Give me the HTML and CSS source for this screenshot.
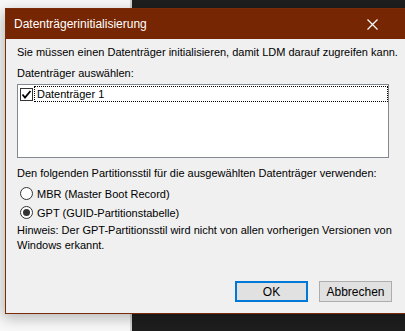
FILE: index.html
```html
<!DOCTYPE html>
<html lang="de">
<head>
  <meta charset="UTF-8" />
  <title>Datenträgerinitialisierung</title>
  <link rel="stylesheet" href="styles.css">
</head>
<body>
  <div class="desktop">
    <div class="pane-light"></div>
    <div class="pane-split"></div>
    <div class="pane-dark"></div>
  </div>

  <div class="dialog">
    <div class="titlebar">
      <span class="title">Datenträgerinitialisierung</span>
      <svg class="close" width="11" height="11" viewBox="0 0 11 11">
        <path d="M0.5 0.5 L10.5 10.5 M10.5 0.5 L0.5 10.5" stroke="#fff" stroke-width="1.2" fill="none"/>
      </svg>
    </div>

    <div class="body">
      <p class="line first">Sie müssen einen Datenträger initialisieren, damit LDM darauf zugreifen kann.</p>
      <p class="line label">Datenträger auswählen:</p>

      <div class="listbox">
        <div class="list-item">
          <span class="check">
            <svg width="11" height="11" viewBox="0 0 11 11">
              <path d="M1.5 5.5 L4 8.5 L9.5 2" stroke="#000" stroke-width="1.8" fill="none"/>
            </svg>
          </span>
          <span class="item-text">Datenträger 1</span>
        </div>
      </div>

      <p class="line style-label">Den folgenden Partitionsstil für die ausgewählten Datenträger verwenden:</p>

      <div class="radios">
        <label class="radio-row"><span class="radio"></span>MBR (Master Boot Record)</label>
        <label class="radio-row"><span class="radio on"></span>GPT (GUID-Partitionstabelle)</label>
      </div>

      <p class="line note">Hinweis: Der GPT-Partitionsstil wird nicht von allen vorherigen Versionen von<br>Windows erkannt.</p>

      <div class="buttons">
        <button class="btn default">OK</button>
        <button class="btn">Abbrechen</button>
      </div>
    </div>
  </div>
</body>
</html>
```

FILE: styles.css
```css
html, body {
  margin: 0;
  padding: 0;
  width: 405px;
  height: 331px;
  overflow: hidden;
}
body {
  font-family: 'Liberation Sans', Arial, sans-serif;
  font-size: 11px;
  color: #000;
  position: relative;
}
.desktop {
  display: flex;
  height: 100%;
}
.pane-light {
  width: 130px;
  background: #f9f9f9;
}
.pane-split {
  width: 2px;
  background: #d4d4d4;
}
.pane-dark {
  flex: 1;
  background: #1e1e1e;
}

/* the window itself sits on the desktop */
.dialog {
  position: absolute;
  left: 5px;
  top: 8px;
  width: 420px;
  height: 304px;
  background: #f0f0f0;
  border: 1px solid #7a2c08;
  box-shadow: -2px 4px 14px rgba(0,0,0,0.28);
}
.titlebar {
  height: 30px;
  background: #762602;
  display: flex;
  align-items: center;
  padding-left: 8px;
  color: #fff;
}
.title {
  font-size: 12px;
  flex: 1;
}
.close {
  margin-right: 48px;
}

.body {
  padding: 6px 0 0 11px;
}
.line {
  margin: 0;
  line-height: 15px;
  white-space: nowrap;
}
.label {
  margin-top: 6px;
}
.listbox {
  margin-top: 3px;
  width: 370px;
  height: 72px;
  background: #fff;
  border: 1px solid #828790;
}
.list-item {
  display: flex;
  align-items: center;
  margin: 1px 0 0 2px;
  height: 16px;
}
.check {
  width: 11px;
  height: 11px;
  border: 1px solid #333;
  background: #fff;
  display: flex;
  margin-right: 1px;
}
.item-text {
  flex: 1;
  height: 14px;
  line-height: 14px;
  padding-left: 2px;
  border: 1px dotted #000;
}
.style-label {
  margin-top: 8px;
}
.radios {
  margin-top: 3px;
}
.radio-row {
  display: flex;
  align-items: center;
  height: 19px;
  padding-left: 3px;
}
.radio {
  width: 11px;
  height: 11px;
  border: 1px solid #333;
  border-radius: 50%;
  background: #fff;
  margin-right: 4px;
  display: flex;
  align-items: center;
  justify-content: center;
}
.radio.on::after {
  content: "";
  width: 7px;
  height: 7px;
  border-radius: 50%;
  background: #333;
}
.note {
  margin-top: 1px;
}
.buttons {
  width: 375px;
  display: flex;
  justify-content: flex-end;
  gap: 11px;
  margin-top: 28px;
}
.btn {
  font-family: 'Liberation Sans', Arial, sans-serif;
  font-size: 12px;
  width: 73px;
  height: 21px;
  padding: 0;
  background: #e1e1e1;
  border: 1px solid #adadad;
  color: #000;
}
.btn.default {
  border: 2px solid #0078d7;
}
```
